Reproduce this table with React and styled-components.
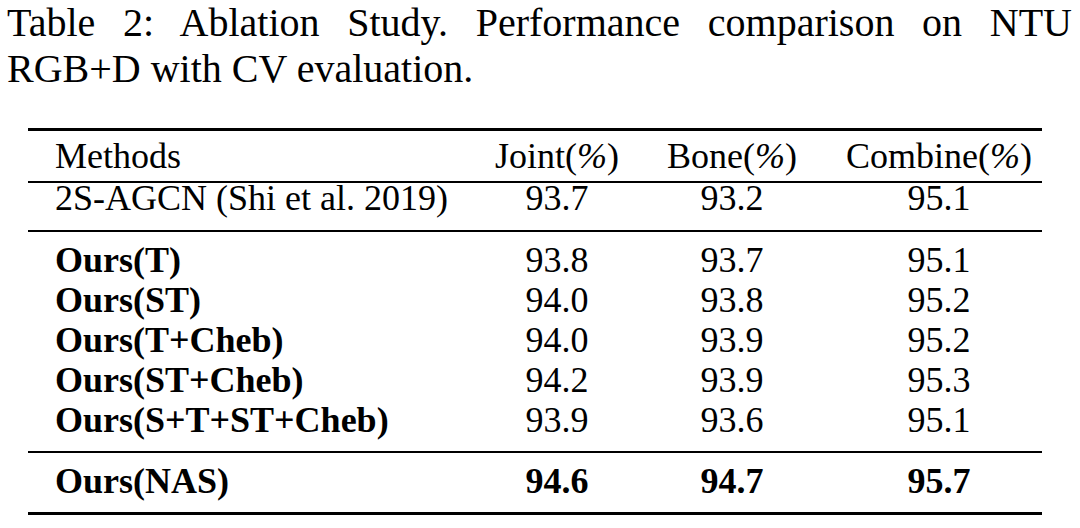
import styled, { createGlobalStyle } from 'styled-components';

const GlobalStyle = createGlobalStyle`
	body {
		margin: 0;
		background: #fff;
		color: #000;
		font-family: "Liberation Serif", "Times New Roman", serif;
	}
`;

const COLUMNS = '458px 142px 208px 206px';

const baseline = [
	{ name: '2S-AGCN (Shi et al. 2019)', joint: '93.7', bone: '93.2', combine: '95.1' },
];

const variants = [
	{ name: 'Ours(T)', joint: '93.8', bone: '93.7', combine: '95.1' },
	{ name: 'Ours(ST)', joint: '94.0', bone: '93.8', combine: '95.2' },
	{ name: 'Ours(T+Cheb)', joint: '94.0', bone: '93.9', combine: '95.2' },
	{ name: 'Ours(ST+Cheb)', joint: '94.2', bone: '93.9', combine: '95.3' },
	{ name: 'Ours(S+T+ST+Cheb)', joint: '93.9', bone: '93.6', combine: '95.1' },
];

const best = { name: 'Ours(NAS)', joint: '94.6', bone: '94.7', combine: '95.7' };

const Page = styled.div`
	padding: 0 8px 0 7px;
	width: 1065px;
`;

const Caption = styled.p`
	margin: 0;
	font-size: 40px;
	line-height: 46px;
	text-align: justify;
`;

const Table = styled.div`
	margin: 36px 0 0 21px;
	width: 1014px;
	font-size: 36px;
	line-height: 30px;
`;

const Rule = styled.div`
	height: ${({ $weight }) => $weight}px;
	background: #000;
`;

const Row = styled.div`
	display: grid;
	grid-template-columns: ${COLUMNS};
	padding-top: ${({ $top }) => $top ?? 5}px;
	padding-bottom: ${({ $bottom }) => $bottom ?? 5}px;
	font-weight: ${({ $bold }) => ($bold ? 700 : 400)};
`;

const Method = styled.div`
	padding-left: 27px;
	white-space: nowrap;
	font-weight: ${({ $bold }) => ($bold ? 700 : 'inherit')};
`;

const Value = styled.div`
	text-align: center;
	white-space: nowrap;
`;

const Pct = styled.span`
	font-style: italic;
`;

const Section = styled.div`
	padding-top: ${({ $top }) => $top}px;
	padding-bottom: ${({ $bottom }) => $bottom}px;
`;

const DataRow = ({ row, boldName, boldAll, top, bottom }) => (
	<Row $top={top} $bottom={bottom} $bold={boldAll}>
		<Method $bold={boldName}>{row.name}</Method>
		<Value>{row.joint}</Value>
		<Value>{row.bone}</Value>
		<Value>{row.combine}</Value>
	</Row>
);

export default function App() {
	return (
		<Page>
			<GlobalStyle />
			<Caption>
				Table 2: Ablation Study. Performance comparison on NTU RGB+D with CV
				evaluation.
			</Caption>

			<Table>
				<Rule $weight={3} />
				<Row $top={10} $bottom={10}>
					<Method>Methods</Method>
					<Value>
						Joint(<Pct>%</Pct>)
					</Value>
					<Value>
						Bone(<Pct>%</Pct>)
					</Value>
					<Value>
						Combine(<Pct>%</Pct>)
					</Value>
				</Row>
				<Rule $weight={2} />
				{baseline.map((row) => (
					<DataRow key={row.name} row={row} top={0} bottom={17} />
				))}
				<Rule $weight={2} />
				<Section $top={8} $bottom={11}>
					{variants.map((row) => (
						<DataRow key={row.name} row={row} boldName />
					))}
				</Section>
				<Rule $weight={2} />
				<DataRow row={best} boldAll top={13} bottom={16} />
				<Rule $weight={3} />
			</Table>
		</Page>
	);
}
